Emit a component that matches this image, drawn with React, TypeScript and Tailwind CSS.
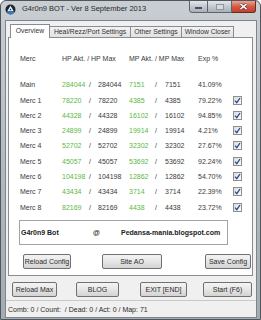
import React from 'react';

interface Fila {
  nombre: string;
  hp: string;
  hpMax: string;
  mp: string;
  mpMax: string;
  exp: string;
  check: boolean;
}

const FILAS: Fila[] = [
  { nombre: 'Main', hp: '284044', hpMax: '284044', mp: '7151', mpMax: '7151', exp: '41.09%', check: false },
  { nombre: 'Merc 1', hp: '78220', hpMax: '78220', mp: '4385', mpMax: '4385', exp: '79.22%', check: true },
  { nombre: 'Merc 2', hp: '44328', hpMax: '44328', mp: '16102', mpMax: '16102', exp: '94.85%', check: true },
  { nombre: 'Merc 3', hp: '24899', hpMax: '24899', mp: '19914', mpMax: '19914', exp: '4.21%', check: true },
  { nombre: 'Merc 4', hp: '52702', hpMax: '52702', mp: '32302', mpMax: '32302', exp: '27.67%', check: true },
  { nombre: 'Merc 5', hp: '45057', hpMax: '45057', mp: '53692', mpMax: '53692', exp: '92.24%', check: true },
  { nombre: 'Merc 6', hp: '104198', hpMax: '104198', mp: '12862', mpMax: '12862', exp: '54.70%', check: true },
  { nombre: 'Merc 7', hp: '43434', hpMax: '43434', mp: '3714', mpMax: '3714', exp: '22.39%', check: true },
  { nombre: 'Merc 8', hp: '82169', hpMax: '82169', mp: '4438', mpMax: '4438', exp: '23.72%', check: true },
];

const FILA_GRID = 'grid grid-cols-[42px_27px_9px_31px_26px_10px_33px_35px_9px] items-center h-[15.34px]';

function Boton({ texto, clase }: { texto: string; clase: string }) {
  return (
    <div
      className={`h-[15px] flex items-center justify-center rounded-[2px] border border-[#707070] bg-gradient-to-b from-[#f4f4f4] via-[#e6e6e6] to-[#d3d3d3] text-[7px] text-[#2a2a2a] leading-none ${clase}`}
    >
      {texto}
    </div>
  );
}

function Casilla() {
  return (
    <div className="w-[9px] h-[9px] border border-[#8f8f8f] bg-gradient-to-br from-[#dcdcdc] to-[#fbfbfb] flex items-center justify-center">
      <svg width="7" height="7" viewBox="0 0 7 7">
        <path d="M1 3.6 L2.8 5.6 L6 1" fill="none" stroke="#2a4a91" strokeWidth="1.3" />
      </svg>
    </div>
  );
}

export default function App() {
  return (
    <div
      className="w-[261px] h-[320px] flex flex-col overflow-hidden rounded-t-[6px] border border-[#50565c] bg-gradient-to-b from-[#c9ced3] via-[#b3bac1] to-[#a3abb3]"
      style={{ fontFamily: '"Liberation Sans", Arial, sans-serif' }}
    >
      {/* Barra de título */}
      <div className="h-[19px] flex items-start shrink-0">
        <svg width="11" height="11" viewBox="0 0 11 11" className="ml-[4px] mt-[3px]">
          <circle cx="5.5" cy="5.5" r="5" fill="#1d2733" />
          <ellipse cx="5.5" cy="8.4" rx="3.6" ry="1.8" fill="#3f8fd8" opacity="0.8" />
          <path d="M5.5 1.8 L8.6 7 L2.4 7 Z" fill="#f4f6f8" />
          <path d="M5.5 4.4 L6.6 6.3 L4.4 6.3 Z" fill="#1d2733" />
        </svg>
        <span className="ml-[6px] mt-[4px] text-[7.5px] leading-none text-[#2a2a2a] whitespace-nowrap">
          G4r0n9 BOT - Ver 8 September 2013
        </span>
        <div className="ml-auto mr-[4px] flex h-[13px] -mt-px">
          <div className="w-[19px] h-full border border-[#5c6670] rounded-bl-[3px] bg-gradient-to-b from-[#e3e7eb] via-[#c2c9d0] to-[#a7b0b9] flex items-end justify-center pb-[3px]">
            <div className="w-[7px] h-[2px] bg-white border border-[#4a5058]" />
          </div>
          <div className="w-[24px] h-full border-y border-r border-[#5c6670] bg-gradient-to-b from-[#e3e7eb] via-[#c2c9d0] to-[#a7b0b9] flex items-center justify-center">
            <div className="w-[8px] h-[6px] border border-[#8d959d] bg-[#d6dbe0]" />
          </div>
          <div className="w-[24px] h-full border-y border-r border-[#6a2a20] rounded-br-[3px] bg-gradient-to-b from-[#e9a596] via-[#d35a45] to-[#c2402c] flex items-center justify-center">
            <svg width="9" height="7" viewBox="0 0 9 7">
              <path d="M1.5 0.8 L7.5 6.2 M7.5 0.8 L1.5 6.2" stroke="#3a1510" strokeWidth="2.6" />
              <path d="M1.5 0.8 L7.5 6.2 M7.5 0.8 L1.5 6.2" stroke="#ffffff" strokeWidth="1.6" />
            </svg>
          </div>
        </div>
      </div>

      {/* Área cliente */}
      <div className="ml-[4px] mr-[3px] h-[298px] shrink-0 border border-[#7d858d] bg-[#f0f0f0] flex flex-col text-[#3a3a3a]">
        {/* Pestañas */}
        <div className="ml-[2px] mr-[3px]">
          <div className="mt-[3px] h-[13px] flex items-end pl-[2px] text-[6.8px] leading-none whitespace-nowrap text-[#333]">
            <div className="relative z-10 -mb-px w-[40px] h-[14px] border border-b-0 border-[#898c95] bg-white flex items-center justify-center pb-[1px]">
              Overview
            </div>
            <div className="w-[81px] h-[11px] border border-b-0 border-l-0 border-[#898c95] bg-gradient-to-b from-[#f2f2f2] to-[#e1e1e1] flex items-center justify-center">
              Heal/Rezz/Port Settings
            </div>
            <div className="w-[51px] h-[11px] border border-b-0 border-l-0 border-[#898c95] bg-gradient-to-b from-[#f2f2f2] to-[#e1e1e1] flex items-center justify-center">
              Other Settings
            </div>
            <div className="w-[52px] h-[11px] border border-b-0 border-l-0 border-[#898c95] bg-gradient-to-b from-[#f2f2f2] to-[#e1e1e1] flex items-center justify-center">
              Window Closer
            </div>
          </div>

          {/* Panel Overview */}
          <div className="h-[239px] border border-[#898c95] bg-white flex flex-col text-[7px] leading-none whitespace-nowrap">
            <div className={`${FILA_GRID} mt-[13px] pl-[11px]`}>
              <span>Merc</span>
              <span className="col-span-3">HP Akt. / HP Max</span>
              <span className="col-span-3">MP Akt. / MP Max</span>
              <span>Exp %</span>
            </div>

            <div className="mt-[10.7px] pl-[11px]">
              {FILAS.map((fila) => (
                <div key={fila.nombre} className={FILA_GRID}>
                  <span>{fila.nombre}</span>
                  <span className="text-[#5cb846] overflow-hidden">{fila.hp}</span>
                  <span>/</span>
                  <span className="overflow-hidden">{fila.hpMax}</span>
                  <span className="text-[#5cb846]">{fila.mp}</span>
                  <span>/</span>
                  <span>{fila.mpMax}</span>
                  <span>{fila.exp}</span>
                  {fila.check ? <Casilla /> : <span />}
                </div>
              ))}
            </div>

            <div className="mt-[4.6px] ml-[10px] w-[209px] h-[25px] border border-[#a3a3a3] flex items-center font-bold text-[#222] pt-px">
              <span className="ml-[1px] w-[72px]">G4r0n9 Bot</span>
              <span className="w-[28px]">@</span>
              <span>Pedansa-mania.blogspot.com</span>
            </div>

            <div className="mt-[9px] flex">
              <Boton texto="Reload Config" clase="ml-[14px] w-[48px]" />
              <Boton texto="Site AO" clase="ml-[31px] w-[60px]" />
              <Boton texto="Save Config" clase="ml-[43px] w-[46px]" />
            </div>
          </div>
        </div>

        {/* Botones inferiores */}
        <div className="mt-[6px] flex">
          <Boton texto="Reload Max" clase="ml-[6px] w-[45px]" />
          <Boton texto="BLOG" clase="ml-[19px] w-[43px]" />
          <Boton texto="EXIT [END]" clase="ml-[21px] w-[47px]" />
          <Boton texto="Start (F6)" clase="ml-[16px] w-[49px]" />
        </div>

        {/* Barra de estado */}
        <div className="mt-[3px] flex-1 border-t border-[#c9c9c9] flex items-center pl-[2px] text-[7px] leading-none text-[#2a2a2a] whitespace-pre">
          Comb: 0 / Count:  / Dead: 0 / Act: 0 / Map: 71
        </div>
      </div>
    </div>
  );
}
